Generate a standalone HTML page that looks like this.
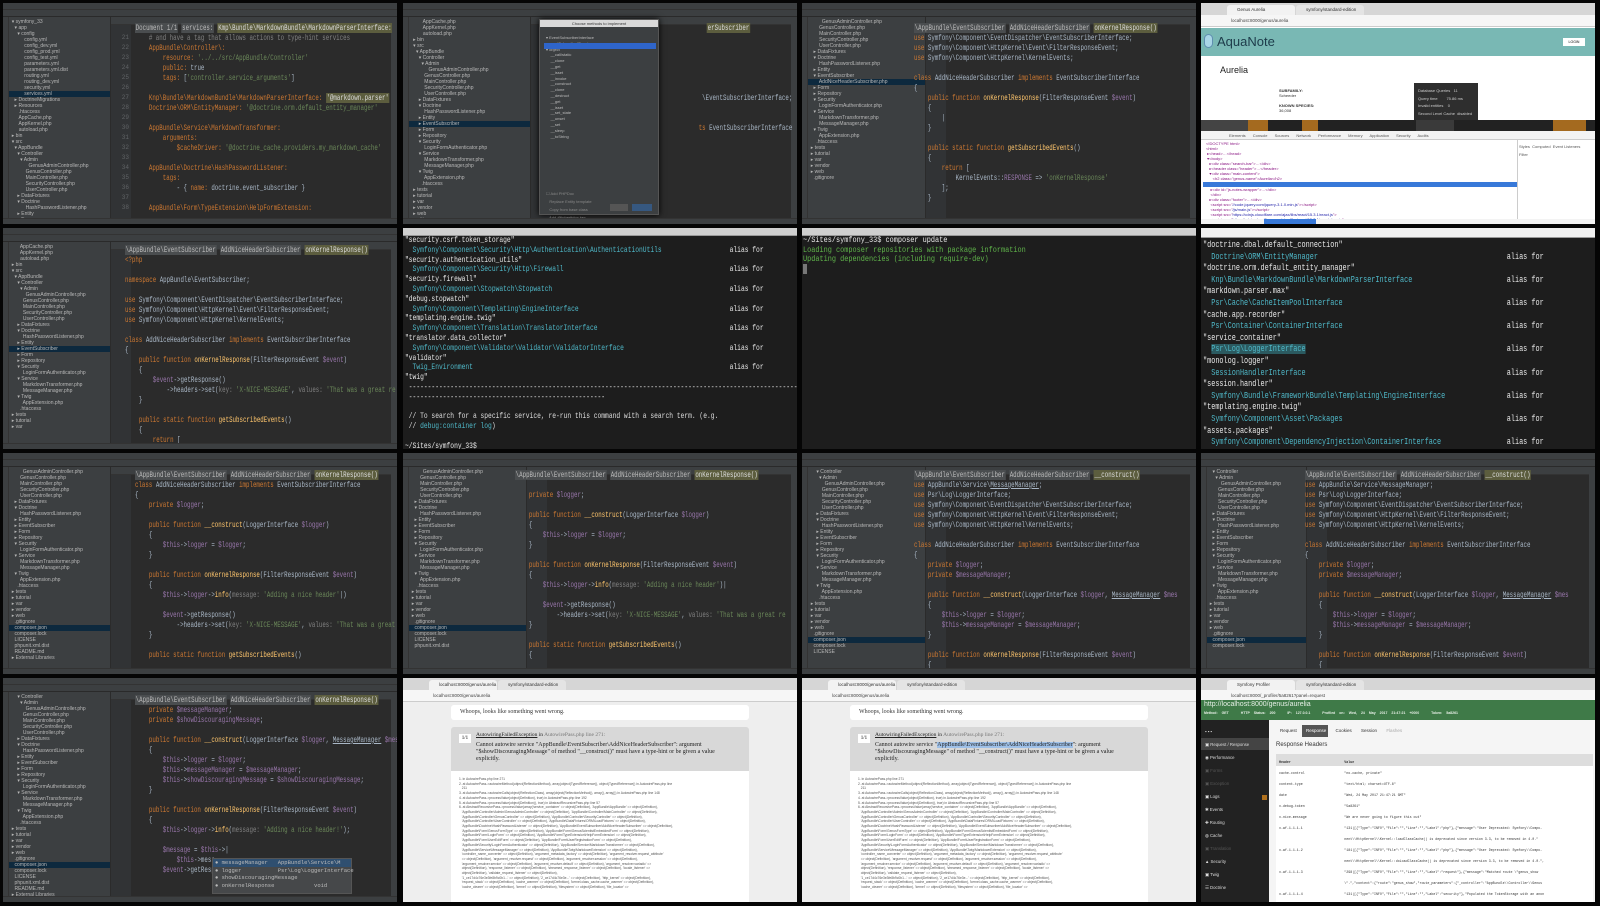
<!DOCTYPE html>
<html><head><meta charset="utf-8"><style>
*{margin:0;padding:0;box-sizing:border-box}
body{width:1600px;height:906px;background:#050505;position:relative;overflow:hidden;font-family:"Liberation Sans",sans-serif}
.c{position:absolute;width:394px;height:221px;overflow:hidden}
.ide{background:#2b2b2b}
.t1{position:absolute;left:0;top:0;width:100%;height:7px;background:#3c3f41;border-bottom:1px solid #333}
.t2{position:absolute;left:0;top:7px;width:100%;height:7px;background:#3c3f41;border-bottom:1px solid #2a2a2a}
.rail{position:absolute;left:0;top:14px;width:6px;bottom:6px;background:#3c3f41;border-right:1px solid #333}
.rr{position:absolute;right:0;top:14px;width:6px;bottom:6px;background:#3c3f41}
.side{position:absolute;left:6px;top:14px;bottom:6px;background:#3c3f41;border-right:1px solid #2b2b2b;overflow:hidden}
.side pre{font:5px/6px "Liberation Sans",sans-serif;color:#b8b8b8;white-space:pre;padding-top:2px}
.hl{background:#0d293e;display:block}
.st{position:absolute;left:0;bottom:0;width:100%;height:6px;background:#3c3f41;border-top:1px solid #333}
.tabs{position:absolute;top:14px;height:8px;right:6px;background:#3c3f41;border-bottom:1px solid #333}
.gut{position:absolute;top:22px;bottom:6px;width:20px;background:#313335}
.code{position:absolute;font:8.5px/10px "Liberation Mono",monospace;color:#a9b7c6;white-space:pre;transform:scaleX(.68);transform-origin:0 0}
.ln{position:absolute;font:6px/10px "Liberation Mono",monospace;color:#606366;white-space:pre;text-align:right}
.k{color:#cc7832}.v{color:#9876aa}.s{color:#6a8759}.f{color:#ffc66d}.g{color:#808080}.y{color:#bbb529}
.bc{background:#4a4d4f;color:#bbb;padding:0 1px}
.bc2{background:#5c5d3e;color:#ddd;padding:0 1px}
.term{background:#1d1d1d}
.tbar{position:absolute;left:0;top:0;width:100%;height:8px;background:#cfcfcf;border-bottom:1px solid #999}
.tc{position:absolute;font:8.5px/9.8px "Liberation Mono",monospace;color:#e8e8e8;white-space:pre;transform:scaleX(.74);transform-origin:0 0}
.cy{color:#4fb8c8}.gr{color:#5fb34a}
.br{background:#fff}
.btab{position:absolute;left:0;top:0;width:100%;height:12px;background:#d6d6d6}
.baddr{position:absolute;left:0;top:12px;width:100%;height:12px;background:#f6f6f6;border-bottom:1px solid #ccc;font:4.5px/12px sans-serif;color:#444;padding-left:30px}
.tab{position:absolute;top:2px;height:10px;background:#f2f2f2;border-radius:3px 3px 0 0;font:4.5px/10px sans-serif;color:#333;padding-left:10px}
.tiny{font:4px/6px "Liberation Sans",sans-serif;color:#666;white-space:pre}
</style></head><body>

<!-- R1C1 -->
<div class="c ide" style="left:3px;top:3px">
<div class="t1"></div><div class="t2"></div><div class="rail"></div><div class="rr"></div>
<div class="side" style="width:102px"><pre>  ▾ symfony_33
    ▾ app
      ▾ config
           config.yml
           config_dev.yml
           config_prod.yml
           config_test.yml
           parameters.yml
           parameters.yml.dist
           routing.yml
           routing_dev.yml
           security.yml
<span class="hl">           services.yml</span>    ▸ DoctrineMigrations
    ▸ Resources
       .htaccess
       AppCache.php
       AppKernel.php
       autoload.php
  ▸ bin
  ▾ src
    ▾ AppBundle
      ▾ Controller
        ▾ Admin
              GenusAdminController.php
            GenusController.php
            MainController.php
            SecurityController.php
            UserController.php
      ▸ DataFixtures
      ▾ Doctrine
            HashPasswordListener.php
      ▸ Entity
      ▸ Form</pre></div>
<div class="tabs" style="left:108px"></div>
<div class="gut" style="left:108px"></div>
<div class="ln" style="left:108px;top:30px;width:18px">21
22
23
24
25
26
27
28
29
30
31
32
33
34
35
36
37
38</div>
<div class="code" style="left:132px;top:20px"><span class="bc">Document 1/1</span> <span class="bc">services:</span> <span class="bc2">Kmp\Bundle\MarkdownBundle\MarkdownParserInterface:</span>
<span class="g">    # and have a tag that allows actions to type-hint services</span>
    <span class="k">AppBundle\Controller\:</span>
        <span class="k">resource:</span> <span class="s">'../../src/AppBundle/Controller'</span>
        <span class="k">public:</span> true
        <span class="k">tags:</span> [<span class="s">'controller.service_arguments'</span>]

    <span class="k">Knp\Bundle\MarkdownBundle\MarkdownParserInterface:</span> <span class="bc2">'@markdown.parser'</span>
    <span class="k">Doctrine\ORM\EntityManager:</span> <span class="s">'@doctrine.orm.default_entity_manager'</span>

    <span class="k">AppBundle\Service\MarkdownTransformer:</span>
        <span class="k">arguments:</span>
            <span class="k">$cacheDriver:</span> <span class="s">'@doctrine_cache.providers.my_markdown_cache'</span>

    <span class="k">AppBundle\Doctrine\HashPasswordListener:</span>
        <span class="k">tags:</span>
            - { <span class="k">name:</span> doctrine.event_subscriber }

    <span class="k">AppBundle\Form\TypeExtension\HelpFormExtension:</span></div>
<div class="st"></div>
</div>

<!-- R1C2 -->
<div class="c ide" style="left:403px;top:3px">
<div class="t1"></div><div class="t2"></div><div class="rail"></div><div class="rr"></div>
<div class="side" style="width:122px"><pre>          AppCache.php
          AppKernel.php
          autoload.php
   ▸ bin
   ▾ src
     ▾ AppBundle
       ▾ Controller
         ▾ Admin
              GenusAdminController.php
           GenusController.php
           MainController.php
           SecurityController.php
           UserController.php
       ▸ DataFixtures
       ▾ Doctrine
           HashPasswordListener.php
       ▸ Entity
<span class="hl">       ▸ EventSubscriber</span>       ▸ Form
       ▸ Repository
       ▾ Security
           LoginFormAuthenticator.php
       ▾ Service
           MarkdownTransformer.php
           MessageManager.php
       ▾ Twig
           AppExtension.php
         .htaccess
   ▸ tests
   ▸ tutorial
   ▸ var
   ▸ vendor
   ▸ web
     .gitignore</pre></div>
<div class="tabs" style="left:128px"></div>
<div class="gut" style="left:128px"></div>
<div class="ln" style="left:128px;top:30px;width:18px">1
2
3
4
5
6
7
8
9
10
11</div>
<div class="code" style="left:150px;top:20px"><span class="bc">Ma</span>                                          <span class="bc2">erSubscriber</span>
<span class="k">&lt;?</span>


<span class="k">nam</span>


<span class="k">use</span>                                        \EventSubscriberInterface;


<span class="k">cla</span>                                       <span class="k">ts</span> EventSubscriberInterface
{


}</div>
<div style="position:absolute;left:136px;top:16px;width:120px;height:196px;background:#3c3f41;border:1px solid #555;box-shadow:0 0 6px #000">
 <div style="height:7px;background:#d9d9d9;font:4px/7px sans-serif;color:#333;text-align:center">Choose methods to implement</div>
 <div style="position:absolute;left:4px;top:23px;width:112px;height:6px;background:#2f65ca"></div>
 <pre class="tiny" style="color:#bbb;padding:8px 0 0 6px;line-height:5.8px">▾ EventSubscriberInterface
      getSubscribedEvents
▾ object
    __call/static
    __clone
    __get
    __isset
    __invoke
    __construct
    __clone
    __destruct
    __get
    __isset
    __set_state
    __unset
    __set
    __sleep
    __toString</pre>
 <pre class="tiny" style="color:#888;position:absolute;left:6px;top:170px;line-height:8px">☐ Add PHPDoc
   Replace Entity template
   Copy from base class
   Add @inheritdoc tag</pre>
 <div style="position:absolute;left:70px;top:184px;width:18px;height:7px;background:#555"></div>
 <div style="position:absolute;left:92px;top:184px;width:20px;height:7px;background:#365880"></div>
</div>
<div class="st"></div>
</div>

<!-- R1C3 -->
<div class="c ide" style="left:802px;top:3px">
<div class="t1"></div><div class="t2"></div><div class="rail"></div><div class="rr"></div>
<div class="side" style="width:118px"><pre>          GenusAdminController.php
        GenusController.php
        MainController.php
        SecurityController.php
        UserController.php
    ▸ DataFixtures
    ▾ Doctrine
        HashPasswordListener.php
    ▸ Entity
    ▾ EventSubscriber
<span class="hl">        AddNiceHeaderSubscriber.php</span>    ▸ Form
    ▸ Repository
    ▾ Security
        LoginFormAuthenticator.php
    ▾ Service
        MarkdownTransformer.php
        MessageManager.php
    ▾ Twig
        AppExtension.php
      .htaccess
  ▸ tests
  ▸ tutorial
  ▸ var
  ▸ vendor
  ▸ web
    .gitignore</pre></div>
<div class="tabs" style="left:124px"></div>
<div class="gut" style="left:124px"></div>
<div class="code" style="left:112px;top:20px"><span class="bc">\AppBundle\EventSubscriber</span> <span class="bc">AddNiceHeaderSubscriber</span> <span class="bc2">onKernelResponse()</span>
<span class="k">use</span> Symfony\Component\EventDispatcher\EventSubscriberInterface;
<span class="k">use</span> Symfony\Component\HttpKernel\Event\FilterResponseEvent;
<span class="k">use</span> Symfony\Component\HttpKernel\KernelEvents;

<span class="k">class</span> AddNiceHeaderSubscriber <span class="k">implements</span> EventSubscriberInterface
{
    <span class="k">public function</span> <span class="f">onKernelResponse</span>(FilterResponseEvent <span class="v">$event</span>)
    {
        |
    }

    <span class="k">public static function</span> <span class="f">getSubscribedEvents</span>()
    {
        <span class="k">return</span> [
            KernelEvents::<span class="v">RESPONSE</span> =&gt; <span class="s">'onKernelResponse'</span>
        ];
    }</div>
<div class="st"></div>
</div>

<!-- R1C4 AquaNote -->
<div class="c br" style="left:1201px;top:3px">
<div class="btab"><div style="position:absolute;left:3px;top:3px;width:14px;height:4px"><span style="display:inline-block;width:3px;height:3px;border-radius:50%;background:#e0443e"></span> <span style="display:inline-block;width:3px;height:3px;border-radius:50%;background:#dea123"></span> <span style="display:inline-block;width:3px;height:3px;border-radius:50%;background:#1aab29"></span></div><div class="tab" style="left:26px;width:68px">Genus Aurelia</div><div class="tab" style="left:95px;width:68px;background:#e4e4e4">symfony/standard-edition</div></div>
<div class="baddr">localhost:8000/genus/aurelia</div>
<div style="position:absolute;left:0;top:25px;width:100%;height:28px;background:#79b8b4"><div style="position:absolute;left:3px;top:6px;width:9px;height:14px;border-radius:5px;background:#a9d6e6;border:1px solid #5f8fb0"></div><div style="position:absolute;left:16px;top:5px;font:13px/18px 'Liberation Sans',sans-serif;color:#1d3b4a">AquaNote</div><div style="position:absolute;right:10px;top:10px;width:22px;height:8px;background:#fff;font:3.5px/8px sans-serif;text-align:center">LOGIN</div></div>
<div style="position:absolute;left:19px;top:62px;font:9px 'Liberation Sans',sans-serif;color:#222">Aurelia</div>
<div style="position:absolute;left:78px;top:85px;font:bold 4px/5px sans-serif;color:#333">SUBFAMILY:<br><span style="font-weight:normal">Scheeder</span><br><br>KNOWN SPECIES:<br><span style="font-weight:normal">36,008</span></div>
<div style="position:absolute;left:213px;top:80px;width:64px;height:38px;background:#2e2e2e"><pre class="tiny" style="color:#ccc;padding:4px;line-height:7.5px">Database Queries   11
Query time        75.86 ms
Invalid entities    0
Second Level Cache  disabled</pre></div>
<div style="position:absolute;left:0;top:117px;width:100%;height:11px;background:#222"><div style="position:absolute;left:0;top:0;width:47px;height:11px;background:#444"></div><div style="position:absolute;left:47px;top:0;width:20px;height:11px;background:#a46a1f"></div><div style="position:absolute;left:101px;top:0;width:16px;height:11px;background:#a46a1f"></div><div style="position:absolute;left:215px;top:0;width:38px;height:11px;background:#3a3a3a"></div><div style="position:absolute;left:352px;top:0;width:33px;height:11px;background:#a46a1f"></div></div>
<div style="position:absolute;left:0;top:128px;width:100%;height:9px;background:#f3f3f3;border-bottom:1px solid #ccc;font:4px/9px sans-serif;color:#555;padding-left:28px;word-spacing:6px">Elements Console Sources Network Performance Memory Application Security Audits</div>
<div style="position:absolute;left:316px;top:137px;width:1px;height:84px;background:#ccc"></div>
<div style="position:absolute;left:318px;top:140px;font:4px/8px sans-serif;color:#555">Styles &nbsp;Computed &nbsp;Event Listeners<br>Filter</div>
<pre class="tiny" style="position:absolute;left:5px;top:138px;color:#881280;line-height:5px">&lt;!DOCTYPE html&gt;
&lt;html&gt;
 ▸&lt;head&gt;…&lt;/head&gt;
 ▾&lt;body&gt;
   ▸&lt;div class="search-bar"&gt;…&lt;/div&gt;
   ▸&lt;header class="header"&gt;…&lt;/header&gt;
   ▾&lt;div class="main-content"&gt;
      &lt;h2 class="genus-name"&gt;Aurelia&lt;/h2&gt;</pre>
<div style="position:absolute;left:2px;top:179px;width:314px;height:5px;background:#3879d9"></div>
<pre class="tiny" style="position:absolute;left:5px;top:184px;color:#881280;line-height:5px">    ▸&lt;div id="js-notes-wrapper"&gt;…&lt;/div&gt;
    &lt;/div&gt;
   ▸&lt;div class="footer"&gt;…&lt;/div&gt;
    &lt;script src="<span style="color:#1a1aa6">//code.jquery.com/jquery-3.1.0.min.js</span>"&gt;&lt;/script&gt;
    &lt;script src="<span style="color:#1a1aa6">/js/main.js</span>"&gt;&lt;/script&gt;
    &lt;script src="<span style="color:#1a1aa6">https://cdnjs.cloudflare.com/ajax/libs/react/15.3.1/react.js</span>"&gt;
    &lt;script src="<span style="color:#1a1aa6">https://cdnjs.cloudflare.com/ajax/libs/react/15.3.1/react-dom.js</span>"&gt;</pre>
<div style="position:absolute;left:0;top:216px;width:100%;height:5px;background:#f3f3f3"><div style="position:absolute;left:63px;width:52px;height:5px;background:#3879d9"></div></div>
</div>

<!-- R2C1 -->
<div class="c ide" style="left:3px;top:228px">
<div class="t1"></div><div class="t2"></div><div class="rail"></div><div class="rr"></div>
<div class="side" style="width:102px"><pre>        AppCache.php
        AppKernel.php
        autoload.php
  ▸ bin
  ▾ src
    ▾ AppBundle
      ▾ Controller
        ▾ Admin
            GenusAdminController.php
          GenusController.php
          MainController.php
          SecurityController.php
          UserController.php
      ▸ DataFixtures
      ▾ Doctrine
          HashPasswordListener.php
      ▸ Entity
<span class="hl">      ▸ EventSubscriber</span>      ▸ Form
      ▸ Repository
      ▾ Security
          LoginFormAuthenticator.php
      ▾ Service
          MarkdownTransformer.php
          MessageManager.php
      ▾ Twig
          AppExtension.php
        .htaccess
  ▸ tests
  ▸ tutorial
  ▸ var</pre></div>
<div class="tabs" style="left:108px"></div>
<div class="gut" style="left:108px"></div>
<div class="code" style="left:122px;top:17px"><span class="bc">\AppBundle\EventSubscriber</span> <span class="bc">AddNiceHeaderSubscriber</span> <span class="bc2">onKernelResponse()</span>
<span class="k">&lt;?php</span>

<span class="k">namespace</span> AppBundle\EventSubscriber;

<span class="k">use</span> Symfony\Component\EventDispatcher\EventSubscriberInterface;
<span class="k">use</span> Symfony\Component\HttpKernel\Event\FilterResponseEvent;
<span class="k">use</span> Symfony\Component\HttpKernel\KernelEvents;

<span class="k">class</span> AddNiceHeaderSubscriber <span class="k">implements</span> EventSubscriberInterface
{
    <span class="k">public function</span> <span class="f">onKernelResponse</span>(FilterResponseEvent <span class="v">$event</span>)
    {
        <span class="v">$event</span>-&gt;getResponse()
            -&gt;headers-&gt;set(<span class="g">key:</span> <span class="s">'X-NICE-MESSAGE'</span>, <span class="g">values:</span> <span class="s">'That was a great re</span>
    }

    <span class="k">public static function</span> <span class="f">getSubscribedEvents</span>()
    {
        <span class="k">return</span> [</div>
<div class="st"></div>
</div>

<!-- R2C2 terminal -->
<div class="c term" style="left:403px;top:228px">
<div class="tbar"></div>
<div class="tc" style="left:2px;top:8px">"security.csrf.token_storage"
  <span class="cy">Symfony\Component\Security\Http\Authentication\AuthenticationUtils</span>                  alias for
"security.authentication_utils"
  <span class="cy">Symfony\Component\Security\Http\Firewall</span>                                            alias for
"security.firewall"
  <span class="cy">Symfony\Component\Stopwatch\Stopwatch</span>                                               alias for
"debug.stopwatch"
  <span class="cy">Symfony\Component\Templating\EngineInterface</span>                                        alias for
"templating.engine.twig"
  <span class="cy">Symfony\Component\Translation\TranslatorInterface</span>                                   alias for
"translator.data_collector"
  <span class="cy">Symfony\Component\Validator\Validator\ValidatorInterface</span>                            alias for
"validator"
  <span class="cy">Twig_Environment</span>                                                                    alias for
"twig"
 ---------------------------------------------------------------------------------------------------------
 ----------------------------------------------------

 <span style="color:#ddd">// To search for a specific service, re-run this command with a search term. (e.g.</span>
 <span style="color:#ddd">// <span class="cy">debug:container log</span>)</span>

~/Sites/symfony_33$</div>
</div>

<!-- R2C3 terminal -->
<div class="c term" style="left:802px;top:228px">
<div class="tbar"></div>
<div class="tc" style="left:1px;top:8px;line-height:9.6px;font-size:8.6px;transform:scaleX(.8)">~/Sites/symfony_33$ composer update
<span class="gr">Loading composer repositories with package information</span>
<span class="gr">Updating dependencies (including require-dev)</span>
<span style="background:#777"> </span></div>
</div>

<!-- R2C4 terminal -->
<div class="c term" style="left:1201px;top:228px">
<div class="tbar" style="background:#f0f0f0;height:10px"></div>
<div class="tc" style="left:2px;top:12px;font-size:9px;line-height:11.6px;transform:scaleX(.76)">"doctrine.dbal.default_connection"
  <span class="cy">Doctrine\ORM\EntityManager</span>                                              alias for
"doctrine.orm.default_entity_manager"
  <span class="cy">Knp\Bundle\MarkdownBundle\MarkdownParserInterface</span>                       alias for
"markdown.parser.max"
  <span class="cy">Psr\Cache\CacheItemPoolInterface</span>                                        alias for
"cache.app.recorder"
  <span class="cy">Psr\Container\ContainerInterface</span>                                        alias for
"service_container"
  <span class="cy" style="background:#2b5a60">Psr\Log\LoggerInterface</span>                                                 alias for
"monolog.logger"
  <span class="cy">SessionHandlerInterface</span>                                                 alias for
"session.handler"
  <span class="cy">Symfony\Bundle\FrameworkBundle\Templating\EngineInterface</span>               alias for
"templating.engine.twig"
  <span class="cy">Symfony\Component\Asset\Packages</span>                                        alias for
"assets.packages"
  <span class="cy">Symfony\Component\DependencyInjection\ContainerInterface</span>                alias for
"service_container"
  <span class="cy">Symfony\Component\EventDispatcher\EventDispatcherInterface</span>              alias for</div>
</div>

<!-- R3C1 -->
<div class="c ide" style="left:3px;top:453px">
<div class="t1"></div><div class="t2"></div><div class="rail"></div><div class="rr"></div>
<div class="side" style="width:102px"><pre>          GenusAdminController.php
        GenusController.php
        MainController.php
        SecurityController.php
        UserController.php
    ▸ DataFixtures
    ▾ Doctrine
        HashPasswordListener.php
    ▸ Entity
    ▸ EventSubscriber
    ▸ Form
    ▸ Repository
    ▾ Security
        LoginFormAuthenticator.php
    ▾ Service
        MarkdownTransformer.php
        MessageManager.php
    ▾ Twig
        AppExtension.php
      .htaccess
  ▸ tests
  ▸ tutorial
  ▸ var
  ▸ vendor
  ▸ web
    .gitignore
<span class="hl">    composer.json</span>    composer.lock
    LICENSE
    phpunit.xml.dist
    README.md
  ▸ External Libraries</pre></div>
<div class="tabs" style="left:108px"></div>
<div class="gut" style="left:108px"></div>
<div class="code" style="left:132px;top:17px"><span class="bc">\AppBundle\EventSubscriber</span> <span class="bc">AddNiceHeaderSubscriber</span> <span class="bc2">onKernelResponse()</span>
<span class="k">class</span> AddNiceHeaderSubscriber <span class="k">implements</span> EventSubscriberInterface
{
    <span class="k">private</span> <span class="v">$logger</span>;

    <span class="k">public function</span> <span class="f">__construct</span>(LoggerInterface <span class="v">$logger</span>)
    {
        <span class="v">$this</span>-&gt;<span class="v">logger</span> = <span class="v">$logger</span>;
    }

    <span class="k">public function</span> <span class="f">onKernelResponse</span>(FilterResponseEvent <span class="v">$event</span>)
    {
        <span class="v">$this</span>-&gt;<span class="v">logger</span>-&gt;<span class="f">info</span>(<span class="g">message:</span> <span class="s">'Adding a nice header'</span>|)

        <span class="v">$event</span>-&gt;getResponse()
            -&gt;headers-&gt;set(<span class="g">key:</span> <span class="s">'X-NICE-MESSAGE'</span>, <span class="g">values:</span> <span class="s">'That was a great re</span>
    }

    <span class="k">public static function</span> <span class="f">getSubscribedEvents</span>()</div>
<div class="st"></div>
</div>

<!-- R3C2 -->
<div class="c ide" style="left:403px;top:453px">
<div class="t1"></div><div class="t2"></div><div class="rail"></div><div class="rr"></div>
<div class="side" style="width:118px"><pre>          GenusAdminController.php
        GenusController.php
        MainController.php
        SecurityController.php
        UserController.php
    ▸ DataFixtures
    ▾ Doctrine
        HashPasswordListener.php
    ▸ Entity
    ▸ EventSubscriber
    ▸ Form
    ▸ Repository
    ▾ Security
        LoginFormAuthenticator.php
    ▾ Service
        MarkdownTransformer.php
        MessageManager.php
    ▾ Twig
        AppExtension.php
      .htaccess
  ▸ tests
  ▸ tutorial
  ▸ var
  ▸ vendor
  ▸ web
    .gitignore
<span class="hl">    composer.json</span>    composer.lock
    LICENSE
    phpunit.xml.dist</pre></div>
<div class="tabs" style="left:124px"></div>
<div class="gut" style="left:124px"></div>
<div class="code" style="left:112px;top:17px"><span class="bc">\AppBundle\EventSubscriber</span> <span class="bc">AddNiceHeaderSubscriber</span> <span class="bc2">onKernelResponse()</span>

    <span class="k">private</span> <span class="v">$logger</span>;

    <span class="k">public function</span> <span class="f">__construct</span>(LoggerInterface <span class="v">$logger</span>)
    {
        <span class="v">$this</span>-&gt;<span class="v">logger</span> = <span class="v">$logger</span>;
    }

    <span class="k">public function</span> <span class="f">onKernelResponse</span>(FilterResponseEvent <span class="v">$event</span>)
    {
        <span class="v">$this</span>-&gt;<span class="v">logger</span>-&gt;<span class="f">info</span>(<span class="g">message:</span> <span class="s">'Adding a nice header'</span>)|

        <span class="v">$event</span>-&gt;getResponse()
            -&gt;headers-&gt;set(<span class="g">key:</span> <span class="s">'X-NICE-MESSAGE'</span>, <span class="g">values:</span> <span class="s">'That was a great re</span>
    }

    <span class="k">public static function</span> <span class="f">getSubscribedEvents</span>()
    {</div>
<div class="st"></div>
</div>

<!-- R3C3 -->
<div class="c ide" style="left:802px;top:453px">
<div class="t1"></div><div class="t2"></div><div class="rail"></div><div class="rr"></div>
<div class="side" style="width:118px"><pre>      ▾ Controller
        ▾ Admin
            GenusAdminController.php
          GenusController.php
          MainController.php
          SecurityController.php
          UserController.php
      ▸ DataFixtures
      ▾ Doctrine
          HashPasswordListener.php
      ▸ Entity
      ▸ EventSubscriber
      ▸ Form
      ▸ Repository
      ▾ Security
          LoginFormAuthenticator.php
      ▾ Service
          MarkdownTransformer.php
          MessageManager.php
      ▾ Twig
          AppExtension.php
        .htaccess
  ▸ tests
  ▸ tutorial
  ▸ var
  ▸ vendor
  ▸ web
    .gitignore
<span class="hl">    composer.json</span>    composer.lock
    LICENSE</pre></div>
<div class="tabs" style="left:124px"></div>
<div class="gut" style="left:124px"></div>
<div class="code" style="left:112px;top:17px"><span class="bc">\AppBundle\EventSubscriber</span> <span class="bc">AddNiceHeaderSubscriber</span> <span class="bc2">__construct()</span>
<span class="k">use</span> AppBundle\Service\<u>MessageManager</u>;
<span class="k">use</span> Psr\Log\LoggerInterface;
<span class="k">use</span> Symfony\Component\EventDispatcher\EventSubscriberInterface;
<span class="k">use</span> Symfony\Component\HttpKernel\Event\FilterResponseEvent;
<span class="k">use</span> Symfony\Component\HttpKernel\KernelEvents;

<span class="k">class</span> AddNiceHeaderSubscriber <span class="k">implements</span> EventSubscriberInterface
{
    <span class="k">private</span> <span class="v">$logger</span>;
    <span class="k">private</span> <span class="v">$messageManager</span>;

    <span class="k">public function</span> <span class="f">__construct</span>(LoggerInterface <span class="v">$logger</span>, <u>MessageManager</u> <span class="v">$mes</span>
    {
        <span class="v">$this</span>-&gt;<span class="v">logger</span> = <span class="v">$logger</span>;
        <span class="v">$this</span>-&gt;<span class="v">messageManager</span> = <span class="v">$messageManager</span>;
    }

    <span class="k">public function</span> <span class="f">onKernelResponse</span>(FilterResponseEvent <span class="v">$event</span>)
    {</div>
<div class="st"></div>
</div>

<!-- R3C4 -->
<div class="c ide" style="left:1201px;top:453px">
<div class="t1"></div><div class="t2"></div><div class="rail"></div><div class="rr"></div>
<div class="side" style="width:100px"><pre>    ▾ Controller
      ▾ Admin
          GenusAdminController.php
        GenusController.php
        MainController.php
        SecurityController.php
        UserController.php
    ▸ DataFixtures
    ▾ Doctrine
        HashPasswordListener.php
    ▸ Entity
    ▸ EventSubscriber
    ▸ Form
    ▸ Repository
    ▾ Security
        LoginFormAuthenticator.php
    ▾ Service
        MarkdownTransformer.php
        MessageManager.php
    ▾ Twig
        AppExtension.php
      .htaccess
  ▸ tests
  ▸ tutorial
  ▸ var
  ▸ vendor
  ▸ web
    .gitignore
<span class="hl">    composer.json</span>    composer.lock</pre></div>
<div class="tabs" style="left:106px"></div>
<div class="gut" style="left:106px"></div>
<div class="code" style="left:104px;top:17px"><span class="bc">\AppBundle\EventSubscriber</span> <span class="bc">AddNiceHeaderSubscriber</span> <span class="bc2">__construct()</span>
<span class="k">use</span> AppBundle\Service\MessageManager;
<span class="k">use</span> Psr\Log\LoggerInterface;
<span class="k">use</span> Symfony\Component\EventDispatcher\EventSubscriberInterface;
<span class="k">use</span> Symfony\Component\HttpKernel\Event\FilterResponseEvent;
<span class="k">use</span> Symfony\Component\HttpKernel\KernelEvents;

<span class="k">class</span> AddNiceHeaderSubscriber <span class="k">implements</span> EventSubscriberInterface
{
    <span class="k">private</span> <span class="v">$logger</span>;
    <span class="k">private</span> <span class="v">$messageManager</span>;

    <span class="k">public function</span> <span class="f">__construct</span>(LoggerInterface <span class="v">$logger</span>, <u>MessageManager</u> <span class="v">$mes</span>
    {
        <span class="v">$this</span>-&gt;<span class="v">logger</span> = <span class="v">$logger</span>;
        <span class="v">$this</span>-&gt;<span class="v">messageManager</span> = <span class="v">$messageManager</span>;
    }

    <span class="k">public function</span> <span class="f">onKernelResponse</span>(FilterResponseEvent <span class="v">$event</span>)
    {</div>
<div class="st"></div>
</div>

<!-- R4C1 -->
<div class="c ide" style="left:3px;top:678px;height:224px">
<div class="t1"></div><div class="t2"></div><div class="rail"></div><div class="rr"></div>
<div class="side" style="width:102px"><pre>      ▾ Controller
        ▾ Admin
            GenusAdminController.php
          GenusController.php
          MainController.php
          SecurityController.php
          UserController.php
      ▸ DataFixtures
      ▾ Doctrine
          HashPasswordListener.php
      ▸ Entity
      ▸ EventSubscriber
      ▸ Form
      ▸ Repository
      ▾ Security
          LoginFormAuthenticator.php
      ▾ Service
          MarkdownTransformer.php
          MessageManager.php
      ▾ Twig
          AppExtension.php
        .htaccess
  ▸ tests
  ▸ tutorial
  ▸ var
  ▸ vendor
  ▸ web
    .gitignore
<span class="hl">    composer.json</span>    composer.lock
    LICENSE
    phpunit.xml.dist
    README.md
  ▸ External Libraries</pre></div>
<div class="tabs" style="left:108px"></div>
<div class="gut" style="left:108px"></div>
<div class="code" style="left:132px;top:17px"><span class="bc">\AppBundle\EventSubscriber</span> <span class="bc">AddNiceHeaderSubscriber</span> <span class="bc2">onKernelResponse()</span>
    <span class="k">private</span> <span class="v">$messageManager</span>;
    <span class="k">private</span> <span class="v">$showDiscouragingMessage</span>;

    <span class="k">public function</span> <span class="f">__construct</span>(LoggerInterface <span class="v">$logger</span>, <u>MessageManager</u> <span class="v">$mes</span>
    {
        <span class="v">$this</span>-&gt;<span class="v">logger</span> = <span class="v">$logger</span>;
        <span class="v">$this</span>-&gt;<span class="v">messageManager</span> = <span class="v">$messageManager</span>;
        <span class="v">$this</span>-&gt;<span class="v">showDiscouragingMessage</span> = <span class="v">$showDiscouragingMessage</span>;
    }

    <span class="k">public function</span> <span class="f">onKernelResponse</span>(FilterResponseEvent <span class="v">$event</span>)
    {
        <span class="v">$this</span>-&gt;<span class="v">logger</span>-&gt;<span class="f">info</span>(<span class="g">message:</span> <span class="s">'Adding a nice header!'</span>);

        <span class="v">$message</span> = <span class="v">$this</span>-&gt;|
            <span class="v">$this</span>-&gt;mess
        <span class="v">$event</span>-&gt;getRespo</div>
<div style="position:absolute;left:209px;top:180px;width:140px;height:36px;background:#46484a;border:1px solid #555"><div style="height:8px;background:#2f4f70"></div><pre style="position:absolute;left:2px;top:0;font:5.5px/7.6px 'Liberation Mono',monospace;color:#bbb;white-space:pre">● messageManager   AppBundle\Service\M
● logger           Psr\Log\LoggerInterface
● showDiscouragingMessage
● onKernelResponse            void</pre></div>
<div class="st"></div>
</div>

<!-- R4C2 error page -->
<div class="c" style="left:403px;top:678px;height:224px;background:#eee">
<div class="btab"><div class="tab" style="left:26px;width:68px">localhost:8000/genus/aurelia</div><div class="tab" style="left:95px;width:68px;background:#e4e4e4">symfony/standard-edition</div></div>
<div class="baddr">localhost:8000/genus/aurelia</div>
<div style="position:absolute;left:48px;top:27px;width:298px;height:15px;background:#fff;border-radius:3px;font:6px/15px 'Liberation Serif',serif;color:#333;padding-left:9px">Whoops, looks like something went wrong.</div>
<div style="position:absolute;left:48px;top:49px;width:298px;height:44px;background:#d8d8d8;border-radius:3px 3px 0 0"></div>
<div style="position:absolute;left:56px;top:56px;width:12px;height:9px;background:#fff;font:5px/9px 'Liberation Serif',serif;text-align:center">1/1</div>
<div style="position:absolute;left:73px;top:54px;width:260px;font:5.5px/7px 'Liberation Serif',serif;color:#222"><u>AutowiringFailedException</u> in <span style="color:#777">AutowirePass.php line 271:</span><div style="font-size:6px;line-height:7px;margin-top:3px">Cannot autowire service "AppBundle\EventSubscriber\AddNiceHeaderSubscriber": argument "$showDiscouragingMessage" of method "__construct()" must have a type-hint or be given a value explicitly.</div></div>
<div style="position:absolute;left:48px;top:93px;width:298px;height:131px;background:#fff"></div>
<pre style="position:absolute;left:56px;top:99px;font:3.3px/4.7px 'Liberation Sans',sans-serif;color:#555;white-space:pre">1. in AutowirePass.php line 271
2. at AutowirePass->autowireMethod(object(ReflectionMethod), array(object(TypedReference)), object(TypedReference)) in AutowirePass.php line
   211
3. at AutowirePass->autowireCalls(object(ReflectionClass), array(object(ReflectionMethod)), array(), array()) in AutowirePass.php line 148
4. at AutowirePass->processValue(object(Definition), true) in AutowirePass.php line 192
5. at AutowirePass->processValue(object(Definition)), true) in AbstractRecursivePass.php line 57
6. at AbstractRecursivePass->processValue(array('service_container' => object(Definition), 'AppBundle\AppBundle' => object(Definition),
   'AppBundle\Controller\Admin\GenusAdminController' => object(Definition), 'AppBundle\Controller\MainController' => object(Definition),
   'AppBundle\Controller\GenusController' => object(Definition), 'AppBundle\Controller\SecurityController' => object(Definition),
   'AppBundle\Controller\UserController' => object(Definition), 'AppBundle\DataFixtures\ORM\LoadFixtures' => object(Definition),
   'AppBundle\Doctrine\HashPasswordListener' => object(Definition), 'AppBundle\EventSubscriber\AddNiceHeaderSubscriber' => object(Definition),
   'AppBundle\Form\GenusFormType' => object(Definition), 'AppBundle\Form\GenusScientistEmbeddedForm' => object(Definition),
   'AppBundle\Form\LoginForm' => object(Definition), 'AppBundle\Form\TypeExtension\HelpFormExtension' => object(Definition),
   'AppBundle\Form\UserEditForm' => object(Definition), 'AppBundle\Form\UserRegistrationForm' => object(Definition),
   'AppBundle\Security\LoginFormAuthenticator' => object(Definition), 'AppBundle\Service\MarkdownTransformer' => object(Definition),
   'AppBundle\Service\MessageManager' => object(Definition), 'AppBundle\Twig\MarkdownExtension' => object(Definition),
   'controller_name_converter' => object(Definition), 'argument_metadata_factory' => object(Definition), 'argument_resolver.request_attribute'
   => object(Definition), 'argument_resolver.request' => object(Definition), 'argument_resolver.session' => object(Definition),
   'argument_resolver.service' => object(Definition), 'argument_resolver.default' => object(Definition), 'argument_resolver.variadic' =>
   object(Definition), 'response_listener' => object(Definition), 'streamed_response_listener' => object(Definition), 'locale_listener' =>
   object(Definition), 'validate_request_listener' => object(Definition),
   '1_ce17d4c76e3e3fe8b9c0b1...' => object(Definition), '2_ce17d4c76e3e...' => object(Definition), 'http_kernel' => object(Definition),
   'request_stack' => object(Definition), 'cache_warmer' => object(Definition), 'kernel.class_cache.cache_warmer' => object(Definition),
   'cache_clearer' => object(Definition), 'kernel' => object(Definition), 'filesystem' => object(Definition), 'file_locator' =></pre>
</div>

<!-- R4C3 error page -->
<div class="c" style="left:802px;top:678px;height:224px;background:#eee">
<div class="btab"><div class="tab" style="left:26px;width:68px">localhost:8000/genus/aurelia</div><div class="tab" style="left:95px;width:68px;background:#e4e4e4">symfony/standard-edition</div></div>
<div class="baddr">localhost:8000/genus/aurelia</div>
<div style="position:absolute;left:48px;top:27px;width:298px;height:15px;background:#fff;border-radius:3px;font:6px/15px 'Liberation Serif',serif;color:#333;padding-left:9px">Whoops, looks like something went wrong.</div>
<div style="position:absolute;left:48px;top:49px;width:298px;height:44px;background:#d8d8d8;border-radius:3px 3px 0 0"></div>
<div style="position:absolute;left:56px;top:56px;width:12px;height:9px;background:#fff;font:5px/9px 'Liberation Serif',serif;text-align:center">1/1</div>
<div style="position:absolute;left:73px;top:54px;width:260px;font:5.5px/7px 'Liberation Serif',serif;color:#222"><u>AutowiringFailedException</u> in <span style="color:#777">AutowirePass.php line 271:</span><div style="font-size:6px;line-height:7px;margin-top:3px">Cannot autowire service "<span style="background:#9ec0e8">AppBundle\EventSubscriber\AddNiceHeaderSubscriber</span>": argument "$showDiscouragingMessage" of method "__construct()" must have a type-hint or be given a value explicitly.</div></div>
<div style="position:absolute;left:48px;top:93px;width:298px;height:131px;background:#fff"></div>
<pre style="position:absolute;left:56px;top:99px;font:3.3px/4.7px 'Liberation Sans',sans-serif;color:#555;white-space:pre">1. in AutowirePass.php line 271
2. at AutowirePass->autowireMethod(object(ReflectionMethod), array(object(TypedReference)), object(TypedReference)) in AutowirePass.php line
   211
3. at AutowirePass->autowireCalls(object(ReflectionClass), array(object(ReflectionMethod)), array(), array()) in AutowirePass.php line 148
4. at AutowirePass->processValue(object(Definition), true) in AutowirePass.php line 192
5. at AutowirePass->processValue(object(Definition)), true) in AbstractRecursivePass.php line 57
6. at AbstractRecursivePass->processValue(array('service_container' => object(Definition), 'AppBundle\AppBundle' => object(Definition),
   'AppBundle\Controller\Admin\GenusAdminController' => object(Definition), 'AppBundle\Controller\MainController' => object(Definition),
   'AppBundle\Controller\GenusController' => object(Definition), 'AppBundle\Controller\SecurityController' => object(Definition),
   'AppBundle\Controller\UserController' => object(Definition), 'AppBundle\DataFixtures\ORM\LoadFixtures' => object(Definition),
   'AppBundle\Doctrine\HashPasswordListener' => object(Definition), 'AppBundle\EventSubscriber\AddNiceHeaderSubscriber' => object(Definition),
   'AppBundle\Form\GenusFormType' => object(Definition), 'AppBundle\Form\GenusScientistEmbeddedForm' => object(Definition),
   'AppBundle\Form\LoginForm' => object(Definition), 'AppBundle\Form\TypeExtension\HelpFormExtension' => object(Definition),
   'AppBundle\Form\UserEditForm' => object(Definition), 'AppBundle\Form\UserRegistrationForm' => object(Definition),
   'AppBundle\Security\LoginFormAuthenticator' => object(Definition), 'AppBundle\Service\MarkdownTransformer' => object(Definition),
   'AppBundle\Service\MessageManager' => object(Definition), 'AppBundle\Twig\MarkdownExtension' => object(Definition),
   'controller_name_converter' => object(Definition), 'argument_metadata_factory' => object(Definition), 'argument_resolver.request_attribute'
   => object(Definition), 'argument_resolver.request' => object(Definition), 'argument_resolver.session' => object(Definition),
   'argument_resolver.service' => object(Definition), 'argument_resolver.default' => object(Definition), 'argument_resolver.variadic' =>
   object(Definition), 'response_listener' => object(Definition), 'streamed_response_listener' => object(Definition), 'locale_listener' =>
   object(Definition), 'validate_request_listener' => object(Definition),
   '1_ce17d4c76e3e3fe8b9c0b1...' => object(Definition), '2_ce17d4c76e3e...' => object(Definition), 'http_kernel' => object(Definition),
   'request_stack' => object(Definition), 'cache_warmer' => object(Definition), 'kernel.class_cache.cache_warmer' => object(Definition),
   'cache_clearer' => object(Definition), 'kernel' => object(Definition), 'filesystem' => object(Definition), 'file_locator' =></pre>
</div>

<!-- R4C4 profiler -->
<div class="c" style="left:1201px;top:678px;height:224px;background:#f5f5f5">
<div class="btab"><div class="tab" style="left:26px;width:68px">Symfony Profiler</div><div class="tab" style="left:95px;width:68px;background:#e4e4e4">symfony/standard-edition</div></div>
<div class="baddr">localhost:8000/_profiler/5a8261?panel=request</div>
<div style="position:absolute;left:0;top:22px;width:100%;height:20px;background:#3f7a48;color:#e6efe6;padding-left:3px"><div style="font:7px/10px 'Liberation Sans',sans-serif">http://localhost:8000/genus/aurelia</div><div style="font:bold 3.5px/6px sans-serif;word-spacing:3px">Method: GET &nbsp; HTTP Status: 200 &nbsp; IP: 127.0.0.1 &nbsp; Profiled on: Wed, 24 May 2017 21:47:21 +0000 &nbsp; Token: 5a8261</div></div>
<div style="position:absolute;left:0;top:42px;width:68px;height:182px;background:#222"></div>
<div style="position:absolute;left:0;top:60px;width:68px;height:12px;background:#444"></div>
<pre style="position:absolute;left:4px;top:47px;font:4.3px/13px 'Liberation Sans',sans-serif;color:#ddd;white-space:pre">▪ ▪ ▪
▣ Request / Response
◉ Performance
<span style="color:#555">▣ Forms</span>
<span style="color:#555">▣ Exception</span>
▣ Logs
✱ Events
✚ Routing
◍ Cache
<span style="color:#555">▣ Translation</span>
▲ Security
▣ Twig
☰ Doctrine</pre>
<div style="position:absolute;left:61px;top:117px;width:5px;height:5px;background:#b0711e"></div>
<div style="position:absolute;left:101px;top:47px;width:26px;height:12px;background:#555"></div>
<div style="position:absolute;left:79px;top:49px;font:4.5px/8px sans-serif;color:#333;word-spacing:8px">Request <span style="color:#fff">Response</span> Cookies Session <span style="color:#aaa">Flashes</span></div>
<div style="position:absolute;left:75px;top:63px;font:6px/8px 'Liberation Sans',sans-serif;color:#333">Response Headers</div>
<div style="position:absolute;left:75px;top:76px;width:317px;height:12px;background:#ddd"></div>
<div style="position:absolute;left:75px;top:88px;width:317px;height:136px;background:#fff"></div>
<pre style="position:absolute;left:78px;top:79px;font:3.3px/11px 'Liberation Mono',monospace;color:#333;white-space:pre"><b>Header</b>                           <b>Value</b>
cache-control                    "no-cache, private"
content-type                     "text/html; charset=UTF-8"
date                             "Wed, 24 May 2017 21:47:21 GMT"
x-debug-token                    "5a8261"
x-nice-message                   "We are never going to figure this out"
x-wf-1-1-1-1                     "131|[{"Type":"INFO","File":"","Line":"","Label":"php"},{"message":"User Deprecated: Symfony\\Compo-
                                 nent\\HttpKernel\\Kernel::loadClassCache() is deprecated since version 3.3, to be removed in 4.0."
x-wf-1-1-1-2                     "181|[{"Type":"INFO","File":"","Line":"","Label":"php"},{"message":"User Deprecated: Symfony\\Compo-
                                 nent\\HttpKernel\\Kernel::doLoadClassCache() is deprecated since version 3.3, to be removed in 4.0.",
x-wf-1-1-1-3                     "298|[{"Type":"INFO","File":"","Line":"","Label":"request"},{"message":"Matched route \"genus_show
                                 \".","context":{"route":"genus_show","route_parameters":{"_controller":"AppBundle\\Controller\\Genus
x-wf-1-1-1-4                     "131|[{"Type":"INFO","File":"","Line":"","Label":"security"},"Populated the TokenStorage with an anon</pre>
</div>

</body></html>
